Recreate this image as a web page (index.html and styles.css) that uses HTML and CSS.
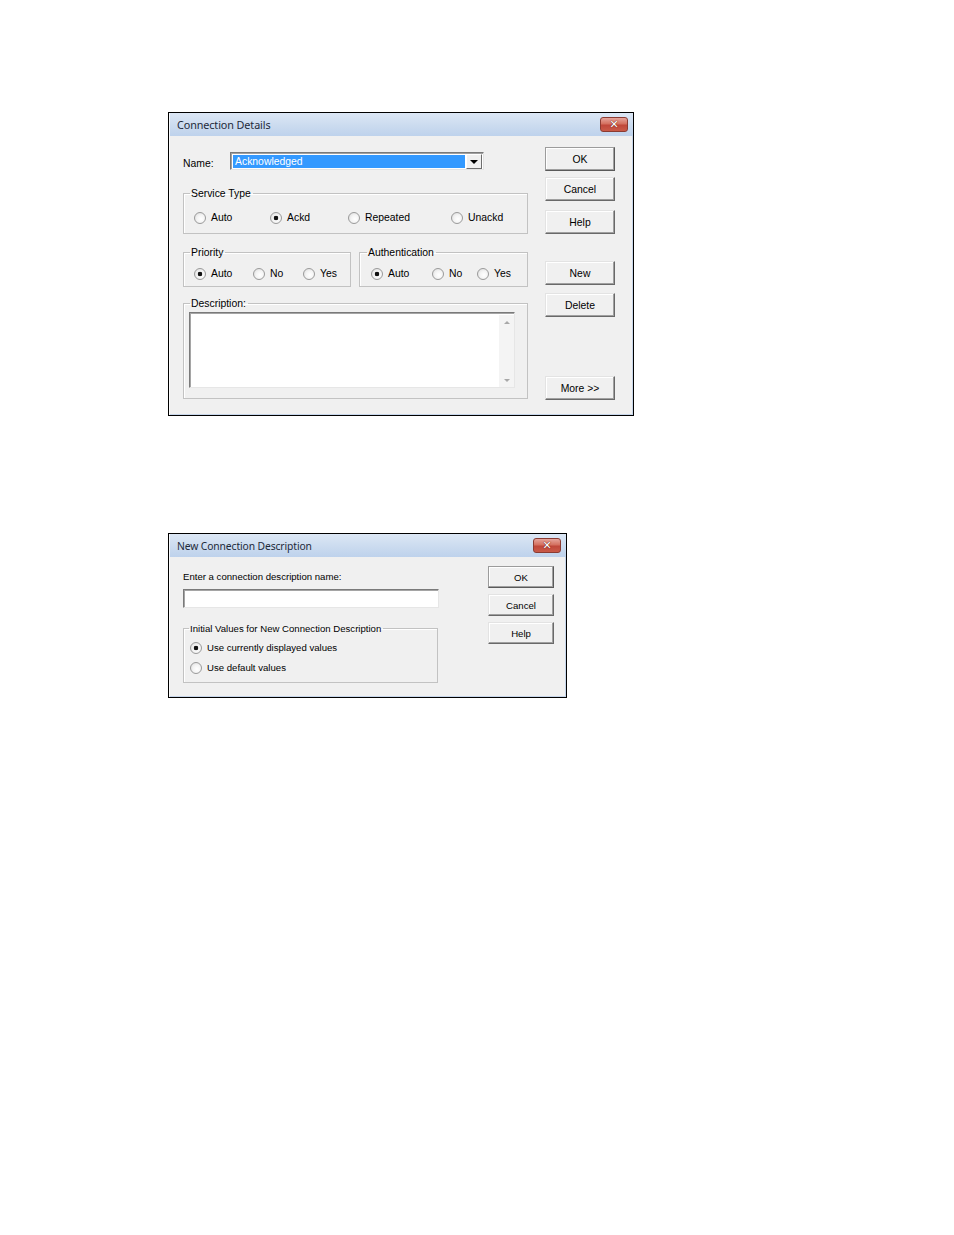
FILE: index.html
```html
<!DOCTYPE html>
<html lang="en">
<head>
    <meta charset="UTF-8">
    <title>Connection Details</title>
    <link rel="stylesheet" href="styles.css">
</head>
<body>
    <div class="page">
        <div class="window details">
            <div class="titlebar">
                <span class="title">Connection Details</span>
                <span class="close-btn">&#x2715;</span>
            </div>
            <div class="window-body">
                <div class="form-col">
                    <div class="name-row">
                        <span class="name-label">Name:</span>
                        <div class="combo">
                            <span class="combo-value">Acknowledged</span>
                            <span class="combo-arrow"></span>
                        </div>
                    </div>

                    <fieldset class="group service">
                        <legend>Service Type</legend>
                        <div class="radios">
                            <label class="radio-item"><span class="radio"></span>Auto</label>
                            <label class="radio-item"><span class="radio checked"></span>Ackd</label>
                            <label class="radio-item"><span class="radio"></span>Repeated</label>
                            <label class="radio-item"><span class="radio"></span>Unackd</label>
                        </div>
                    </fieldset>

                    <div class="group-row">
                        <fieldset class="group priority">
                            <legend>Priority</legend>
                            <div class="radios">
                                <label class="radio-item"><span class="radio checked"></span>Auto</label>
                                <label class="radio-item"><span class="radio"></span>No</label>
                                <label class="radio-item"><span class="radio"></span>Yes</label>
                            </div>
                        </fieldset>
                        <fieldset class="group auth">
                            <legend>Authentication</legend>
                            <div class="radios">
                                <label class="radio-item"><span class="radio checked"></span>Auto</label>
                                <label class="radio-item"><span class="radio"></span>No</label>
                                <label class="radio-item"><span class="radio"></span>Yes</label>
                            </div>
                        </fieldset>
                    </div>

                    <fieldset class="group description">
                        <legend>Description:</legend>
                        <div class="memo">
                            <div class="memo-text"></div>
                            <div class="scrollbar">
                                <span class="arrow-up"></span>
                                <span class="arrow-down"></span>
                            </div>
                        </div>
                    </fieldset>
                </div>

                <div class="button-col">
                    <div class="btn default">OK</div>
                    <div class="btn cancel">Cancel</div>
                    <div class="btn help">Help</div>
                    <div class="btn new">New</div>
                    <div class="btn delete">Delete</div>
                    <div class="btn more">More &gt;&gt;</div>
                </div>
            </div>
        </div>

        <div class="window new-desc">
            <div class="titlebar">
                <span class="title">New Connection Description</span>
                <span class="close-btn">&#x2715;</span>
            </div>
            <div class="window-body">
                <div class="form-col">
                    <p class="prompt">Enter a connection description name:</p>
                    <div class="text-input"></div>
                    <fieldset class="group initial">
                        <legend>Initial Values for New Connection Description</legend>
                        <label class="radio-item"><span class="radio checked"></span>Use currently displayed values</label>
                        <label class="radio-item"><span class="radio"></span>Use default values</label>
                    </fieldset>
                </div>
                <div class="button-col">
                    <div class="btn default">OK</div>
                    <div class="btn">Cancel</div>
                    <div class="btn">Help</div>
                </div>
            </div>
        </div>
    </div>
</body>
</html>
```

FILE: styles.css
```css
* {
    margin: 0;
    padding: 0;
    box-sizing: border-box;
}

body {
    font-family: 'Liberation Sans', Arial, sans-serif;
    font-size: 11px;
    color: #000;
    background: #fff;
}

.page {
    padding: 112px 0 0 168px;
    display: flex;
    flex-direction: column;
    align-items: flex-start;
    gap: 117px;
}

/* window chrome */
.window {
    border: 1px solid #000;
    background: #f0f0f0;
    box-shadow: inset 1px 0 0 #fbfbfb, inset -1px -1px 0 #c7d6ea;
}

.details {
    width: 466px;
    height: 304px;
    font-size: 10.4px;
}

.new-desc {
    width: 399px;
    height: 165px;
    font-size: 9.6px;
}

.titlebar {
    height: 23px;
    display: flex;
    align-items: center;
    justify-content: space-between;
    padding: 0 5px 0 7px;
    background: linear-gradient(#dce7f5 0%, #cbdbef 55%, #bed2ec 100%);
    border-left: 1px solid #f6f9fc;
}

.title {
    font-family: 'Noto Sans', 'Open Sans', sans-serif;
    font-size: 10.8px;
    color: #1e2a3a;
    letter-spacing: -0.1px;
}

.new-desc .title {
    font-size: 10.3px;
}

.close-btn {
    width: 28px;
    height: 15px;
    border-radius: 3px;
    border: 1px solid #8b3b32;
    background: linear-gradient(#e6a49b 0%, #d4705f 45%, #c0473a 55%, #c95a48 100%);
    color: #fff;
    font-size: 11px;
    font-weight: bold;
    line-height: 13px;
    text-align: center;
    font-family: 'DejaVu Sans', sans-serif;
    text-shadow: 0 0 1px #6b1f17, 0 0 1px #6b1f17;
}

.window-body {
    display: flex;
    padding-left: 14px;
}

.details .window-body {
    gap: 17px;
}

.new-desc .window-body {
    gap: 49px;
}

/* name combo */
.form-col {
    display: flex;
    flex-direction: column;
}

.details .form-col {
    width: 345px;
    padding-top: 16px;
}

.name-row {
    display: flex;
    align-items: center;
    height: 18px;
}

.name-label {
    width: 47px;
    padding-top: 4px;
}

.combo {
    width: 254px;
    height: 18px;
    display: flex;
    border: 1px solid;
    border-color: #7a7a7a #e3e3e3 #e3e3e3 #7a7a7a;
    box-shadow: inset 1px 1px 0 #a0a0a0;
    background: #fff;
    padding: 2px 1px 1px 2px;
}

.combo-value {
    flex: 1;
    background: #3399ff;
    color: #fff;
    line-height: 13px;
    padding-left: 2px;
    border-right: 1px solid #fff;
}

.combo-arrow {
    width: 16px;
    margin: -1px 0 -1px 0;
    background: #f0f0f0;
    border: 1px solid;
    border-color: #fff #6e6e6e #6e6e6e #fff;
    display: flex;
    align-items: center;
    justify-content: center;
}

.combo-arrow::before {
    content: '';
    border-left: 4px solid transparent;
    border-right: 4px solid transparent;
    border-top: 4px solid #000;
}

/* group boxes */
.group {
    border: 1px solid #c2c2c2;
    box-shadow: inset 1px 1px 0 #fff;
    min-width: 0;
}

.group legend {
    line-height: 13px;
    padding: 0 2px 0 1px;
}

.service {
    margin-top: 17px;
    padding: 11px 0 9px 10px;
}

.service legend,
.priority legend,
.auth legend {
    margin-left: -4px;
}

.radios {
    display: grid;
    align-items: center;
}

.service .radios {
    grid-template-columns: 76px 78px 103px auto;
}

.radio-item {
    display: flex;
    align-items: center;
    gap: 5px;
    line-height: 13px;
    height: 13px;
}

.radio {
    width: 12px;
    height: 12px;
    border-radius: 50%;
    border: 1px solid #9a9a9a;
    background: radial-gradient(circle at 60% 60%, #fff 0%, #f4f4f4 45%, #d8d8d8 100%);
    flex: none;
}

.radio.checked {
    background: radial-gradient(circle, #111 0, #111 2px, transparent 2.6px),
                radial-gradient(circle at 60% 60%, #fff 0%, #f4f4f4 45%, #d8d8d8 100%);
}

.group-row {
    display: flex;
    gap: 8px;
    margin-top: 12px;
}

.priority,
.auth {
    padding: 8px 0 6px 10px;
    width: 169px;
}

.auth {
    width: 170px;
    padding-left: 11px;
}

.priority .radios {
    grid-template-columns: 59px 50px auto;
}

.auth .radios {
    grid-template-columns: 61px 45px auto;
}

.description {
    margin-top: 10px;
    padding: 2px 12px 10px 5px;
}

.description legend {
    margin-left: 1px;
}

.memo {
    height: 76px;
    display: flex;
    border: 1px solid;
    border-color: #7a7a7a #e6e6e6 #e6e6e6 #7a7a7a;
    box-shadow: inset 1px 1px 0 #a5a5a5;
    background: #fff;
}

.memo-text {
    flex: 1;
}

.scrollbar {
    width: 15px;
    margin: 2px 0 0;
    background: #f4f4f4;
    display: flex;
    flex-direction: column;
    justify-content: space-between;
    align-items: center;
    padding: 6px 0 5px;
}

.arrow-up {
    border-left: 3px solid transparent;
    border-right: 3px solid transparent;
    border-bottom: 3px solid #a8a8a8;
}

.arrow-down {
    border-left: 3px solid transparent;
    border-right: 3px solid transparent;
    border-top: 3px solid #a8a8a8;
}

/* buttons */
.button-col {
    display: flex;
    flex-direction: column;
}

.details .button-col {
    padding-top: 11px;
}

.btn {
    width: 70px;
    height: 24px;
    display: flex;
    align-items: center;
    justify-content: center;
    background: #f0f0f0;
    border: 1px solid;
    border-color: #e3e3e3 #696969 #696969 #e3e3e3;
    box-shadow: inset -1px -1px 0 #a0a0a0, inset 1px 1px 0 #fff;
}

.btn.default {
    border-color: #9c9c9c #5a5a5a #5a5a5a #9c9c9c;
}

.details .btn.cancel { margin-top: 6px; }
.details .btn.help { margin-top: 9px; }
.details .btn.new { margin-top: 27px; }
.details .btn.delete { margin-top: 8px; }
.details .btn.more { margin-top: 59px; }

/* new connection description */
.new-desc .form-col {
    width: 256px;
    padding-top: 13px;
}

.prompt {
    line-height: 13px;
}

.text-input {
    margin-top: 6px;
    height: 19px;
    border: 1px solid;
    border-color: #7a7a7a #e6e6e6 #e6e6e6 #7a7a7a;
    box-shadow: inset 1px 1px 0 #a5a5a5;
    background: #fff;
}

.initial {
    width: 255px;
    margin-top: 14px;
    padding: 6px 0 8px 6px;
    display: flex;
    flex-direction: column;
    gap: 7px;
}

.initial legend {
    margin-left: -1px;
}

.new-desc .button-col {
    padding-top: 9px;
    gap: 6px;
}

.new-desc .btn {
    width: 66px;
    height: 22px;
}
```
